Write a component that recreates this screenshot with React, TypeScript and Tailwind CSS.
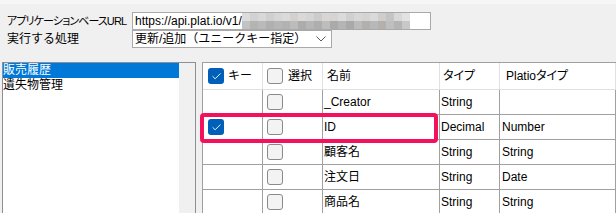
import { Check } from "lucide-react";

// Blurred part of the URL, drawn as a block mosaic.
const mosaicTop = [
  "bg-[#dcdcdc]", "bg-[#d2d2d2]", "bg-[#d8d8d8]", "bg-[#cfcfcf]", "bg-[#d6d6d6]",
  "bg-[#dadada]", "bg-[#d3d0cd]", "bg-[#d9d9d9]", "bg-[#d5d5d5]", "bg-[#cccccc]",
  "bg-[#d8d5d2]", "bg-[#d4d4d4]", "bg-[#dbdbdb]", "bg-[#d0d0d0]", "bg-[#d7d7d7]",
  "bg-[#d6d3d0]", "bg-[#dadada]", "bg-[#d1cdca]", "bg-[#c4c4c4]", "bg-[#d8d8d8]",
  "bg-[#e2e2e2]",
];
const mosaicBottom = [
  "bg-[#c2c2c2]", "bg-[#b4b4b4]", "bg-[#bababa]", "bg-[#b0b0b0]", "bg-[#b8b6b4]",
  "bg-[#b2b2b2]", "bg-[#bcbcbc]", "bg-[#acacac]", "bg-[#b6b6b6]", "bg-[#b0aeac]",
  "bg-[#bdbdbd]", "bg-[#aaaaab]", "bg-[#b5b5b5]", "bg-[#a9a9ab]", "bg-[#bbbbbb]",
  "bg-[#b1b0ae]", "bg-[#b8b8b8]", "bg-[#b3b0ae]", "bg-[#bfbfbf]", "bg-[#b4b4b4]",
  "bg-[#c8c8c8]",
];

const rows = [
  { key: false, name: "_Creator", type: "String", platio: "" },
  { key: true, name: "ID", type: "Decimal", platio: "Number" },
  { key: false, name: "顧客名", type: "String", platio: "String" },
  { key: false, name: "注文日", type: "String", platio: "Date" },
  { key: false, name: "商品名", type: "String", platio: "String" },
];

function Box({ checked }: { checked?: boolean }) {
  if (checked) {
    return (
      <span className="flex h-[16px] w-[16px] shrink-0 items-center justify-center rounded-[3px] bg-[#005fb8]">
        <Check size={11} strokeWidth={2} className="text-white" />
      </span>
    );
  }
  return (
    <span className="block h-[16px] w-[16px] shrink-0 rounded-[3px] border border-[#8a8a8a] bg-[#f3f3f3]" />
  );
}

export default function App() {
  return (
    <div className="h-[213px] w-[616px] overflow-hidden bg-[#f0f0f0] font-['Liberation_Sans','Noto_Sans_CJK_JP',sans-serif] text-black">
      <div className="h-[4px] bg-[#f6f6f7]" />

      <div className="mt-[8px] flex flex-col pl-[7px] text-[12px] leading-none">
        <div className="flex h-[18px] items-center">
          <span className="w-[125px] shrink-0 whitespace-nowrap text-[11px] tracking-[-0.9px] [font-feature-settings:'palt']">
            アプリケーションベースURL
          </span>
          <div className="flex h-[18px] w-[299px] items-center border border-[#a9a9a9] bg-white pl-[2px]">
            <span className="text-[12px]">https://api.plat.io/v1/</span>
            <div className="flex flex-col">
              <div className="flex">
                {mosaicTop.map((c, i) => (
                  <span key={i} className={`h-[8px] w-[8px] ${c}`} />
                ))}
              </div>
              <div className="flex">
                {mosaicBottom.map((c, i) => (
                  <span key={i} className={`h-[8px] w-[8px] ${c}`} />
                ))}
              </div>
            </div>
          </div>
        </div>
        <div className="flex h-[18px] items-center">
          <span className="w-[125px] shrink-0 whitespace-nowrap">実行する処理</span>
          <div className="flex h-[18px] w-[200px] items-center justify-between border border-[#a9a9a9] bg-white pl-[2px] pr-[4px]">
            <span className="whitespace-nowrap">更新/追加（ユニークキー指定）</span>
            <svg width="10" height="6" viewBox="0 0 10 6" className="mr-[1px] shrink-0">
              <polyline points="0.5,0.5 5,5 9.5,0.5" fill="none" stroke="#5a5a5a" strokeWidth="1" />
            </svg>
          </div>
        </div>
      </div>

      <div className="mt-[14px] flex h-[151px]">
        <div className="ml-[2px] flex w-[194px] border-l border-r border-t border-[#8e8f94]">
          <div className="w-[176px] bg-white text-[12px] leading-[15px]">
            <div className="bg-[#0078d7] text-white">販売履歴</div>
            <div>遺失物管理</div>
          </div>
          <div className="flex-1 bg-[#f0f0f0]" />
        </div>

        <div className="w-[6px]" />

        <div className="relative flex-1 border-l border-t border-[#a0a0a0] bg-white text-[12px] leading-none">
          <div className="flex h-[27px] border-b border-[#e1e1e1]">
            <div className="flex w-[60px] items-center border-r border-[#e1e1e1] pl-[5px]">
              <Box checked />
              <span className="ml-[4px]">キー</span>
            </div>
            <div className="flex w-[60px] items-center border-r border-[#e1e1e1] pl-[4px]">
              <Box />
              <span className="ml-[5px]">選択</span>
            </div>
            <div className="flex w-[117px] items-center border-r border-[#e1e1e1] pl-[4px]">名前</div>
            <div className="flex w-[60px] items-center border-r border-[#e1e1e1] pl-[3px] [font-feature-settings:'palt']">タイプ</div>
            <div className="flex w-[116px] items-center border-r border-[#e1e1e1] pl-[6px] [font-feature-settings:'palt']">Platioタイプ</div>
          </div>

          {rows.map((r) => (
            <div key={r.name} className="flex h-[25px] border-b border-[#a0a0a0]">
              <div className="flex w-[60px] items-center border-r border-[#a0a0a0] pl-[5px]">
                {r.key && <Box checked />}
              </div>
              <div className="flex w-[60px] items-center border-r border-[#a0a0a0] pl-[4px]">
                <Box />
              </div>
              <div className="flex w-[117px] items-center border-r border-[#a0a0a0] pl-[1px]">{r.name}</div>
              <div className="flex w-[60px] items-center border-r border-[#a0a0a0] pl-[1px]">{r.type}</div>
              <div className="flex w-[116px] items-center border-r border-[#a0a0a0] pl-[2px]">{r.platio}</div>
            </div>
          ))}

          <div className="absolute left-[-3px] top-[50px] h-[30px] w-[238px] rounded-[4px] border-[4px] border-[#f5105c]" />
        </div>
      </div>
    </div>
  );
}
